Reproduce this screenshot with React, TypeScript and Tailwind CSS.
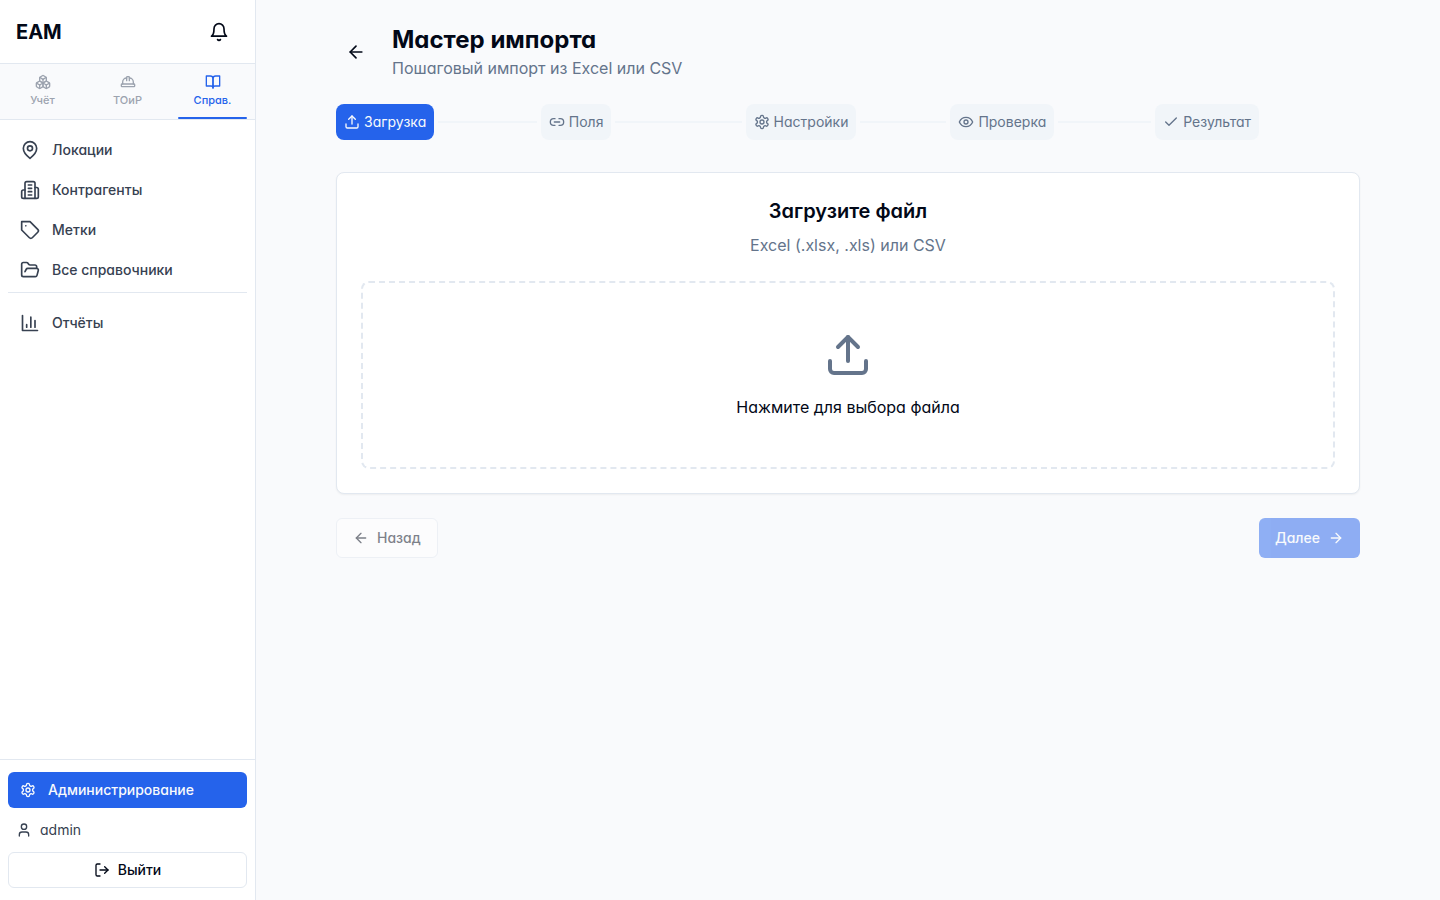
import React from "react";

type IconProps = { className?: string; strokeWidth?: number; children?: React.ReactNode };

function Icon({ className = "size-4", strokeWidth = 2, children }: IconProps) {
  return (
    <svg
      className={`shrink-0 ${className}`}
      viewBox="0 0 24 24"
      fill="none"
      stroke="currentColor"
      strokeWidth={strokeWidth}
      strokeLinecap="round"
      strokeLinejoin="round"
      aria-hidden="true"
    >
      {children}
    </svg>
  );
}

const Bell = (p: IconProps) => (
  <Icon {...p}>
    <path d="M6 8a6 6 0 0 1 12 0c0 7 3 9 3 9H3s3-2 3-9" />
    <path d="M10.3 21a1.94 1.94 0 0 0 3.4 0" />
  </Icon>
);
const Boxes = (p: IconProps) => (
  <Icon {...p}>
    <path d="M2.97 12.92A2 2 0 0 0 2 14.63v3.24a2 2 0 0 0 .97 1.71l3 1.8a2 2 0 0 0 2.06 0L12 19v-5.5l-5-3-4.03 2.42Z" />
    <path d="m7 16.5-4.74-2.85" />
    <path d="m7 16.5 5-3" />
    <path d="M7 16.5v5.17" />
    <path d="M12 13.5V19l3.97 2.38a2 2 0 0 0 2.06 0l3-1.8a2 2 0 0 0 .97-1.71v-3.24a2 2 0 0 0-.97-1.71L17 10.5l-5 3Z" />
    <path d="m17 16.5-5-3" />
    <path d="m17 16.5 4.74-2.85" />
    <path d="M17 16.5v5.17" />
    <path d="M7.97 4.42A2 2 0 0 0 7 6.13v4.37l5 3 5-3V6.13a2 2 0 0 0-.97-1.71l-3-1.8a2 2 0 0 0-2.06 0l-3 1.8Z" />
    <path d="M12 8 7.26 5.15" />
    <path d="m12 8 4.74-2.85" />
    <path d="M12 13.5V8" />
  </Icon>
);
const HardHat = (p: IconProps) => (
  <Icon {...p}>
    <path d="M2 18a1 1 0 0 0 1 1h18a1 1 0 0 0 1-1v-2a1 1 0 0 0-1-1H3a1 1 0 0 0-1 1v2z" />
    <path d="M10 10V5a1 1 0 0 1 1-1h2a1 1 0 0 1 1 1v5" />
    <path d="M4 15v-3a6 6 0 0 1 6-6" />
    <path d="M14 6a6 6 0 0 1 6 6v3" />
  </Icon>
);
const BookOpen = (p: IconProps) => (
  <Icon {...p}>
    <path d="M2 3h6a4 4 0 0 1 4 4v14a3 3 0 0 0-3-3H2z" />
    <path d="M22 3h-6a4 4 0 0 0-4 4v14a3 3 0 0 1 3-3h7z" />
  </Icon>
);
const MapPin = (p: IconProps) => (
  <Icon {...p}>
    <path d="M20 10c0 6-8 12-8 12s-8-6-8-12a8 8 0 0 1 16 0Z" />
    <circle cx="12" cy="10" r="3" />
  </Icon>
);
const Building = (p: IconProps) => (
  <Icon {...p}>
    <path d="M6 22V4a2 2 0 0 1 2-2h8a2 2 0 0 1 2 2v18Z" />
    <path d="M6 12H4a2 2 0 0 0-2 2v6a2 2 0 0 0 2 2h2" />
    <path d="M18 9h2a2 2 0 0 1 2 2v9a2 2 0 0 1-2 2h-2" />
    <path d="M10 6h4M10 10h4M10 14h4M10 18h4" />
  </Icon>
);
const Tag = (p: IconProps) => (
  <Icon {...p}>
    <path d="M12 2H2v10l9.29 9.29c.94.94 2.48.94 3.42 0l6.58-6.58c.94-.94.94-2.48 0-3.42L12 2Z" />
    <path d="M7 7h.01" />
  </Icon>
);
const FolderOpen = (p: IconProps) => (
  <Icon {...p}>
    <path d="m6 14 1.5-2.9A2 2 0 0 1 9.24 10H20a2 2 0 0 1 1.94 2.5l-1.54 6a2 2 0 0 1-1.95 1.5H4a2 2 0 0 1-2-2V5a2 2 0 0 1 2-2h3.9a2 2 0 0 1 1.69.9l.81 1.2a2 2 0 0 0 1.67.9H18a2 2 0 0 1 2 2v2" />
  </Icon>
);
const BarChart = (p: IconProps) => (
  <Icon {...p}>
    <path d="M3 3v18h18" />
    <path d="M18 17V9M13 17V5M8 17v-3" />
  </Icon>
);
const Settings = (p: IconProps) => (
  <Icon {...p}>
    <path d="M12.22 2h-.44a2 2 0 0 0-2 2v.18a2 2 0 0 1-1 1.73l-.43.25a2 2 0 0 1-2 0l-.15-.08a2 2 0 0 0-2.73.73l-.22.38a2 2 0 0 0 .73 2.73l.15.1a2 2 0 0 1 1 1.72v.51a2 2 0 0 1-1 1.74l-.15.09a2 2 0 0 0-.73 2.73l.22.38a2 2 0 0 0 2.73.73l.15-.08a2 2 0 0 1 2 0l.43.25a2 2 0 0 1 1 1.73V20a2 2 0 0 0 2 2h.44a2 2 0 0 0 2-2v-.18a2 2 0 0 1 1-1.73l.43-.25a2 2 0 0 1 2 0l.15.08a2 2 0 0 0 2.73-.73l.22-.39a2 2 0 0 0-.73-2.73l-.15-.08a2 2 0 0 1-1-1.74v-.5a2 2 0 0 1 1-1.74l.15-.09a2 2 0 0 0 .73-2.73l-.22-.38a2 2 0 0 0-2.73-.73l-.15.08a2 2 0 0 1-2 0l-.43-.25a2 2 0 0 1-1-1.73V4a2 2 0 0 0-2-2z" />
    <circle cx="12" cy="12" r="3" />
  </Icon>
);
const User = (p: IconProps) => (
  <Icon {...p}>
    <path d="M19 21v-2a4 4 0 0 0-4-4H9a4 4 0 0 0-4 4v2" />
    <circle cx="12" cy="7" r="4" />
  </Icon>
);
const LogOut = (p: IconProps) => (
  <Icon {...p}>
    <path d="M9 21H5a2 2 0 0 1-2-2V5a2 2 0 0 1 2-2h4" />
    <path d="m16 17 5-5-5-5" />
    <path d="M21 12H9" />
  </Icon>
);
const ArrowLeft = (p: IconProps) => (
  <Icon {...p}>
    <path d="m12 19-7-7 7-7" />
    <path d="M19 12H5" />
  </Icon>
);
const ArrowRight = (p: IconProps) => (
  <Icon {...p}>
    <path d="M5 12h14" />
    <path d="m12 5 7 7-7 7" />
  </Icon>
);
const Upload = (p: IconProps) => (
  <Icon {...p}>
    <path d="M21 15v4a2 2 0 0 1-2 2H5a2 2 0 0 1-2-2v-4" />
    <path d="m17 8-5-5-5 5" />
    <path d="M12 3v12" />
  </Icon>
);
const LinkIcon = (p: IconProps) => (
  <Icon {...p}>
    <path d="M9 17H7A5 5 0 0 1 7 7h2" />
    <path d="M15 7h2a5 5 0 1 1 0 10h-2" />
    <path d="M8 12h8" />
  </Icon>
);
const Eye = (p: IconProps) => (
  <Icon {...p}>
    <path d="M2 12s3-7 10-7 10 7 10 7-3 7-10 7-10-7-10-7Z" />
    <circle cx="12" cy="12" r="3" />
  </Icon>
);
const Check = (p: IconProps) => (
  <Icon {...p}>
    <path d="M20 6 9 17l-5-5" />
  </Icon>
);

const tabs = [
  { label: "Учёт", icon: Boxes, active: false },
  { label: "ТОиР", icon: HardHat, active: false },
  { label: "Справ.", icon: BookOpen, active: true },
];

const navItems = [
  { label: "Локации", icon: MapPin },
  { label: "Контрагенты", icon: Building },
  { label: "Метки", icon: Tag },
  { label: "Все справочники", icon: FolderOpen },
];

const steps = [
  { label: "Загрузка", icon: Upload },
  { label: "Поля", icon: LinkIcon },
  { label: "Настройки", icon: Settings },
  { label: "Проверка", icon: Eye },
  { label: "Результат", icon: Check },
];

function NavItem({ label, icon: Glyph }: { label: string; icon: React.FC<IconProps> }) {
  return (
    <a className="flex h-9 items-center gap-3 rounded-md px-3 text-sm font-medium text-[#374151]">
      <Glyph className="size-5" />
      {label}
    </a>
  );
}

function Sidebar() {
  return (
    <aside className="flex w-64 shrink-0 flex-col border-r border-[#e2e8f0] bg-white">
      <div className="flex h-16 shrink-0 items-center justify-between border-b border-[#e2e8f0] px-4">
        <span className="text-xl font-bold">EAM</span>
        <button className="flex size-10 items-center justify-center">
          <Bell className="size-5" />
        </button>
      </div>
      <div className="grid h-14 shrink-0 grid-cols-3 border-b border-[#e2e8f0] bg-[#f9fafc]">
        {tabs.map(({ label, icon: Glyph, active }) => (
          <button
            key={label}
            className={`relative flex flex-col items-center justify-center gap-0.5 text-[11px] leading-[16.5px] font-medium ${
              active ? "text-[#2563eb]" : "text-[#9ca3af]"
            }`}
          >
            <Glyph className="size-4" />
            {label}
            {active && <span className="absolute inset-x-2 bottom-0 h-0.5 rounded-full bg-[#2563eb]" />}
          </button>
        ))}
      </div>
      <nav className="flex flex-1 flex-col gap-1 px-2 py-3">
        {navItems.map((item) => (
          <NavItem key={item.label} {...item} />
        ))}
        <div className="border-t border-[#e2e8f0] pt-3">
          <NavItem label="Отчёты" icon={BarChart} />
        </div>
      </nav>
      <div className="flex flex-col border-t border-[#e2e8f0] px-2 py-3">
        <button className="flex h-9 items-center gap-3 rounded-md bg-[#2563eb] px-3 text-sm font-medium text-[#f8fafc]">
          <Settings />
          Администрирование
        </button>
        <div className="flex h-11 items-center gap-2 px-2 text-sm text-[#374151]">
          <User />
          admin
        </div>
        <button className="flex h-9 items-center justify-center gap-2 rounded-md border border-[#e2e8f0] bg-white text-sm font-medium">
          <LogOut />
          Выйти
        </button>
      </div>
    </aside>
  );
}

export default function App() {
  return (
    <div className="flex h-screen bg-[#f9fafc] font-['Inter',sans-serif] text-[#020817] antialiased [font-feature-settings:'cv11']">
      <Sidebar />
      <main className="flex-1 px-20 pt-6">
        <header className="flex items-center gap-4">
          <button className="flex size-10 items-center justify-center">
            <ArrowLeft className="size-5" />
          </button>
          <div>
            <h1 className="text-2xl font-bold">Мастер импорта</h1>
            <p className="text-[#64748b]">Пошаговый импорт из Excel или CSV</p>
          </div>
        </header>

        <div className="mt-6 flex">
          {steps.map(({ label, icon: Glyph }, i) => (
            <div key={label} className="flex flex-1 items-center">
              <div
                className={`flex items-center gap-1 rounded-lg p-2 text-sm ${
                  i === 0 ? "bg-[#2563eb] text-[#f8fafc]" : "bg-[#f1f5f9] text-[#64748b]"
                }`}
              >
                <Glyph />
                {label}
              </div>
              {i < steps.length - 1 && <div className="mx-1 h-0.5 flex-1 bg-[#f1f5f9]" />}
            </div>
          ))}
        </div>

        <section className="mt-8 rounded-lg border border-[#e2e8f0] bg-white p-6 text-center shadow-xs">
          <h2 className="text-xl font-semibold">Загрузите файл</h2>
          <p className="mt-2 text-[#64748b]">Excel (.xlsx, .xls) или CSV</p>
          <div className="mt-6 flex flex-col items-center rounded-lg border-2 border-dashed border-[#e2e8f0] p-12">
            <Upload className="mb-4 size-12 text-[#64748b]" />
            <p>Нажмите для выбора файла</p>
          </div>
        </section>

        <div className="mt-6 flex justify-between">
          <button className="flex h-10 items-center gap-2 rounded-md border border-[#e2e8f0] bg-white px-4 text-sm font-medium opacity-50">
            <ArrowLeft />
            Назад
          </button>
          <button className="flex h-10 items-center gap-2 rounded-md bg-[#2563eb] px-4 text-sm font-medium text-[#f8fafc] opacity-50">
            Далее
            <ArrowRight />
          </button>
        </div>
      </main>
    </div>
  );
}
